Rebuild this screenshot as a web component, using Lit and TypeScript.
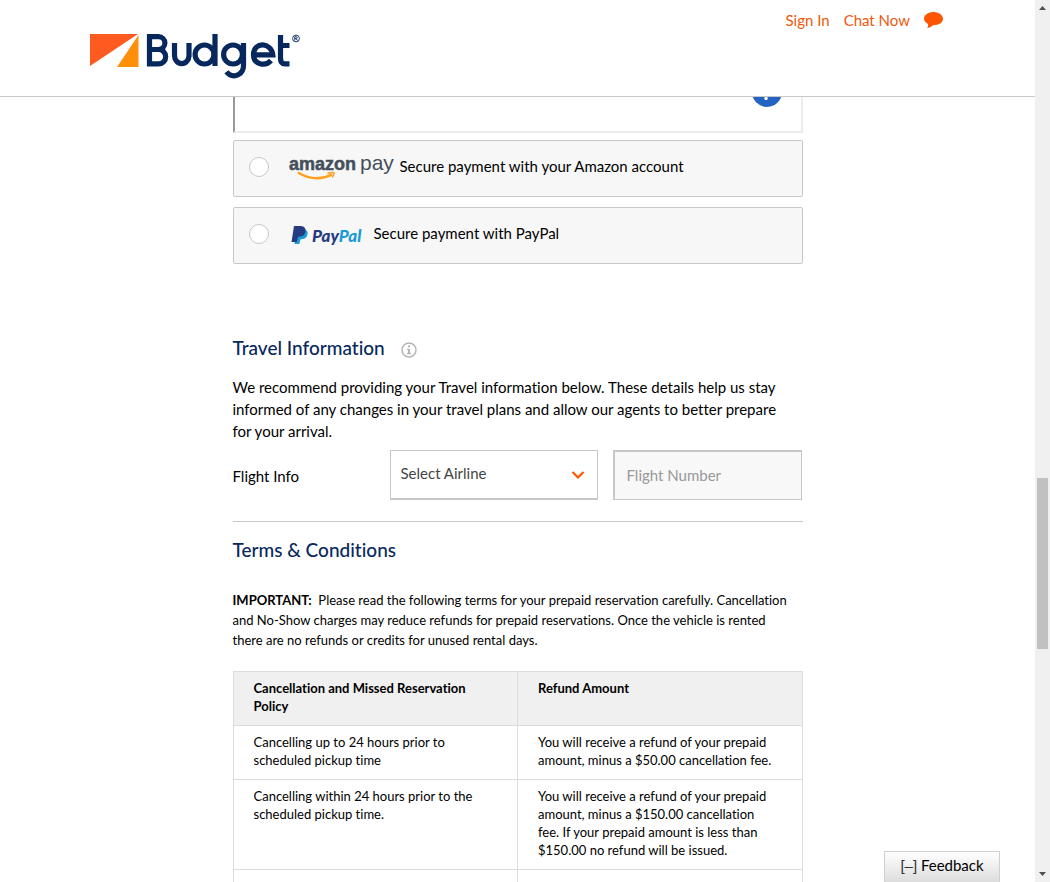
import { LitElement, html, css } from "lit";
import { customElement } from "lit/decorators.js";

const POLICY: [string, string][] = [
  [
    "Cancelling up to 24 hours prior to scheduled pickup time",
    "You will receive a refund of your prepaid amount, minus a $50.00 cancellation fee.",
  ],
  [
    "Cancelling within 24 hours prior to the scheduled pickup time.",
    "You will receive a refund of your prepaid amount, minus a $150.00 cancellation fee. If your prepaid amount is less than $150.00 no refund will be issued.",
  ],
  ["", ""],
];

@customElement("budget-logo")
class BudgetLogo extends LitElement {
  static styles = css`
    :host { display: block; }
    svg { display: block; }
  `;
  render() {
    return html`
      <svg width="212" height="48" viewBox="0 0 212 48" role="img" aria-label="Budget">
        <path d="M0 1H48L0 33Z" fill="#ff5a1f" />
        <path d="M48.500 2V34H27Z" fill="#ff8f0a" />
        <g fill="none" stroke="#07285c" stroke-width="5.200">
          <path d="M59.500 3.700H68.500A6.400 6.400 0 0 1 68.500 16.500H59.500M68.500 16.500A7.200 7.200 0 0 1 68.500 30.900H59.500M59.500 1.100V33.500" />
          <path d="M84.500 10V22.500A7.200 8 0 0 0 99 22.500V10V24" />
          <ellipse cx="114.500" cy="21.500" rx="9.400" ry="9.500" />
          <path d="M125 1V33" />
          <ellipse cx="143" cy="21.500" rx="9.400" ry="9.500" />
          <path d="M153.500 10V32.500C153.500 41.500 145 44.500 139.500 41.600Q138 40.700 136.500 38.700" />
          <path d="M163 21.800H182.800C181.500 9.200 163.800 8.200 163.500 21.500C163.300 31.800 175.500 33.800 181 27.500" />
          <path d="M190.500 2V25.500Q190.500 30.800 195 30.800H199.500M188 12.500H199.500" />
        </g>
        <g fill="none" stroke="#07285c" stroke-width="0.900">
          <circle cx="206" cy="5.500" r="3.400" />
          <path d="M204.800 7.500V3.700H206.200A1 1 0 0 1 206.200 5.700H204.800M206.200 5.700L207.500 7.500" />
        </g>
      </svg>
    `;
  }
}

@customElement("amazon-pay-logo")
class AmazonPayLogo extends LitElement {
  static styles = css`
    :host { display: block; }
    svg { display: block; overflow: visible; }
    text { font-family: "Liberation Sans", sans-serif; fill: #454f5b; }
    .bold { font-size: 18px; font-weight: 700; stroke: #454f5b; stroke-width: 0.5; }
    .thin { font-size: 21px; }
  `;
  render() {
    return html`
      <svg width="107" height="28" viewBox="0 0 107 28" role="img" aria-label="amazon pay">
        <text class="bold" x="0" y="17">amazon</text>
        <text class="thin" x="71" y="17">pay</text>
        <path d="M9 19.500Q26 30 43 21.500" fill="none" stroke="#ff9f1a" stroke-width="2.400" />
        <path d="M38.500 20.200Q46 18.500 45 20.500Q44.800 22 43 24.500" fill="none" stroke="#ff9f1a" stroke-width="1.500" />
      </svg>
    `;
  }
}

@customElement("paypal-logo")
class PaypalLogo extends LitElement {
  static styles = css`
    :host { display: block; }
    svg { display: block; overflow: visible; }
    text { font-family: Lato, sans-serif; font-size: 17px; font-weight: 900; font-style: italic; }
    .navy { fill: #263b80; }
    .sky { fill: #1a9bd7; }
  `;
  render() {
    return html`
      <svg width="80" height="22" viewBox="0 0 80 22" role="img" aria-label="PayPal">
        <path d="M6 5H12Q18 6 16.300 11Q15 15.500 9.500 15.300L8.300 20H3.500Z" fill="#1a9bd7" />
        <path d="M3 2H9.500Q16 2.500 14.200 8.500Q12.800 13 7 12.800L5.800 18H0.500Z" fill="#263b80" />
        <text x="21" y="18"><tspan class="navy">Pay</tspan><tspan class="sky">Pal</tspan></text>
      </svg>
    `;
  }
}

@customElement("app-root")
class AppRoot extends LitElement {
  static styles = css`
    :host {
      display: flex;
      height: 100vh;
      overflow: hidden;
      background: #fff;
      color: #000;
      font-family: Lato, "Noto Sans", sans-serif;
      font-size: 15px;
      font-variant-ligatures: none;
    }
    * { box-sizing: border-box; }
    .page { flex: 1; min-width: 0; display: flex; flex-direction: column; position: relative; }
    header {
      flex: none;
      display: flex;
      justify-content: space-between;
      align-items: flex-start;
      height: 97px;
      padding: 0 92px 0 90px;
      border-bottom: 1px solid #c8c8c8;
    }
    budget-logo { margin-top: 33px; }
    nav { display: flex; align-items: center; gap: 14px; margin-top: 10px; line-height: 20px; }
    a { color: #f0580c; text-decoration: none; }
    nav svg { display: block; }
    main { flex: 1; min-height: 0; overflow: hidden; }
    .column { width: 570px; max-width: 100%; margin: 0 auto; }
    .card-end {
      display: flex;
      justify-content: flex-end;
      height: 36px;
      padding-right: 19px;
      border: 2px solid #ececec;
      border-left-color: #999;
      border-top: 0;
      overflow: hidden;
    }
    .help {
      width: 30px;
      height: 30px;
      margin-top: -20px;
      border: 0;
      border-radius: 50%;
      background: #2563c0;
      color: #fff;
      font: 900 20px/30px Lato, sans-serif;
      padding: 0;
    }
    .option {
      display: flex;
      align-items: center;
      height: 57px;
      margin-top: 7px;
      padding: 0 15px 4px;
      border: 1px solid #c8c8c8;
      border-radius: 2px;
      background: #f7f7f7;
    }
    .option + .option { margin-top: 10px; }
    .option input {
      appearance: none;
      flex: none;
      width: 20px;
      height: 20px;
      margin: 0 20px 0 0;
      border: 1px solid #c8c8c8;
      border-radius: 50%;
      background: #fff;
    }
    .option span { padding-bottom: 2px; }
    .option amazon-pay-logo { margin-right: 4px; }
    .option paypal-logo { margin: 2px 3px 0 2px; }
    h2 { margin: 0; color: #07285c; font-size: 19px; line-height: 26px; font-weight: 500; }
    .title { display: flex; align-items: center; gap: 16px; margin-top: 71px; }
    .info { display: flex; margin-top: 4px; padding: 0; border: 0; background: none; }
    .intro { margin: 15px 0 0; padding-right: 8px; line-height: 22px; }
    .flight { display: flex; align-items: center; margin-top: 8px; padding-right: 1px; }
    .flight .label { width: 157px; padding-top: 2px; }
    .select { position: relative; width: 208px; margin-right: 15px; }
    select, .number { font: inherit; height: 50px; border-radius: 0; display: block; width: 100%; }
    select {
      appearance: none;
      padding: 0 10px 4px;
      border: 1px solid #c8c8c8;
      border-bottom-width: 2px;
      background: #fff;
      color: #444;
    }
    .chevron { position: absolute; right: 13px; top: 20px; pointer-events: none; }
    .number {
      flex: 1;
      min-width: 0;
      padding: 0 12px 2px;
      border: 1px solid #c8c8c8;
      border-top-width: 2px;
      border-left-width: 2px;
      background: #f8f8f8;
    }
    .number::placeholder { color: #999; opacity: 1; }
    hr { margin: 21px 0 15px; border: 0; border-top: 1px solid #c8c8c8; }
    .important { margin: 27px 0 0; padding-right: 4px; font-size: 13px; line-height: 20px; }
    table {
      width: 100%;
      margin-top: 21px;
      border-collapse: collapse;
      table-layout: fixed;
      font-size: 13px;
      line-height: 18px;
    }
    th, td {
      padding: 7px 25px 10px 20px;
      border: 1px solid #dcdcdc;
      text-align: left;
      vertical-align: top;
    }
    td { height: 54px; }
    th { background: #f0f0f0; }
    .feedback {
      position: absolute;
      right: 35px;
      bottom: 0;
      width: 116px;
      height: 31px;
      padding: 0 0 5px;
      border: 1px solid #d0d0d0;
      border-bottom: 0;
      background: linear-gradient(#fff, #ddd);
      color: #000;
      font: inherit;
    }
    .minus { font-family: "Liberation Sans", sans-serif; font-size: 15px; color: #333; }
    .scroll {
      flex: none;
      width: 15px;
      display: grid;
      grid-template-rows: 478fr 171fr 233fr;
      background: #f0f0f0;
      position: relative;
    }
    .thumb { grid-row: 2; margin: 0 2px; background: #c1c1c1; }
    .up, .down { position: absolute; left: 4px; }
    .up { top: 6px; }
    .down { bottom: 6px; }
  `;

  render() {
    return html`
      <div class="page">
        <header>
          <budget-logo></budget-logo>
          <nav>
            <a href="#">Sign In</a>
            <a href="#">Chat Now</a>
            <a href="#" aria-label="Chat">
              <svg width="19" height="18" viewBox="0 0 19 18">
                <path d="M9.500 1C14.800 1 19 4 19 7.800S14.800 14.200 9 14.200Q6.500 16.800 3.200 17.200Q4.500 15 4 13Q0 10.800 0 7.500C0 4 4.200 1 9.500 1Z" fill="#ff5500" />
              </svg>
            </a>
          </nav>
        </header>
        <main>
          <div class="column">
            <div class="card-end"><button class="help" aria-label="Help">?</button></div>
            <label class="option">
              <input type="radio" name="pay" />
              <amazon-pay-logo></amazon-pay-logo>
              <span>Secure payment with your Amazon account</span>
            </label>
            <label class="option">
              <input type="radio" name="pay" />
              <paypal-logo></paypal-logo>
              <span>Secure payment with PayPal</span>
            </label>
            <div class="title">
              <h2>Travel Information</h2>
              <button class="info" aria-label="About travel information">
                <svg width="16" height="16" viewBox="0 0 16 16">
                  <circle cx="8" cy="8" r="7" fill="none" stroke="#b5b5b5" stroke-width="1.500" />
                  <path d="M7 3.500H9V5.300H7ZM6 6.800H9V11H10V12.300H6V11H7V8H6Z" fill="#b5b5b5" />
                </svg>
              </button>
            </div>
            <p class="intro">
              We recommend providing your Travel information below. These details help us stay
              informed of any changes in your travel plans and allow our agents to better prepare
              for your arrival.
            </p>
            <div class="flight">
              <label class="label" for="airline">Flight Info</label>
              <div class="select">
                <select id="airline"><option>Select Airline</option></select>
                <svg class="chevron" width="14" height="10" viewBox="0 0 14 10">
                  <path d="M1.500 2L7 7.500L12.500 2" fill="none" stroke="#ff5500" stroke-width="2.200" />
                </svg>
              </div>
              <input class="number" type="text" placeholder="Flight Number" aria-label="Flight Number" />
            </div>
            <hr />
            <h2>Terms &amp; Conditions</h2>
            <p class="important">
              <strong>IMPORTANT:</strong>&nbsp; Please read the following terms for your prepaid
              reservation carefully. Cancellation and No-Show charges may reduce refunds for prepaid
              reservations. Once the vehicle is rented there are no refunds or credits for unused
              rental days.
            </p>
            <table>
              <thead>
                <tr><th>Cancellation and Missed Reservation Policy</th><th>Refund Amount</th></tr>
              </thead>
              <tbody>
                ${POLICY.map(([when, refund]) => html`<tr><td>${when}</td><td>${refund}</td></tr>`)}
              </tbody>
            </table>
          </div>
        </main>
        <button class="feedback"><span class="minus">[–]</span> Feedback</button>
      </div>
      <div class="scroll" aria-hidden="true">
        <div class="thumb"></div>
        <svg class="up" width="7" height="4" viewBox="0 0 7 4"><path d="M0 4L3.500 0L7 4Z" fill="#505050" /></svg>
        <svg class="down" width="7" height="4" viewBox="0 0 7 4"><path d="M0 0L3.500 4L7 0Z" fill="#505050" /></svg>
      </div>
    `;
  }
}
